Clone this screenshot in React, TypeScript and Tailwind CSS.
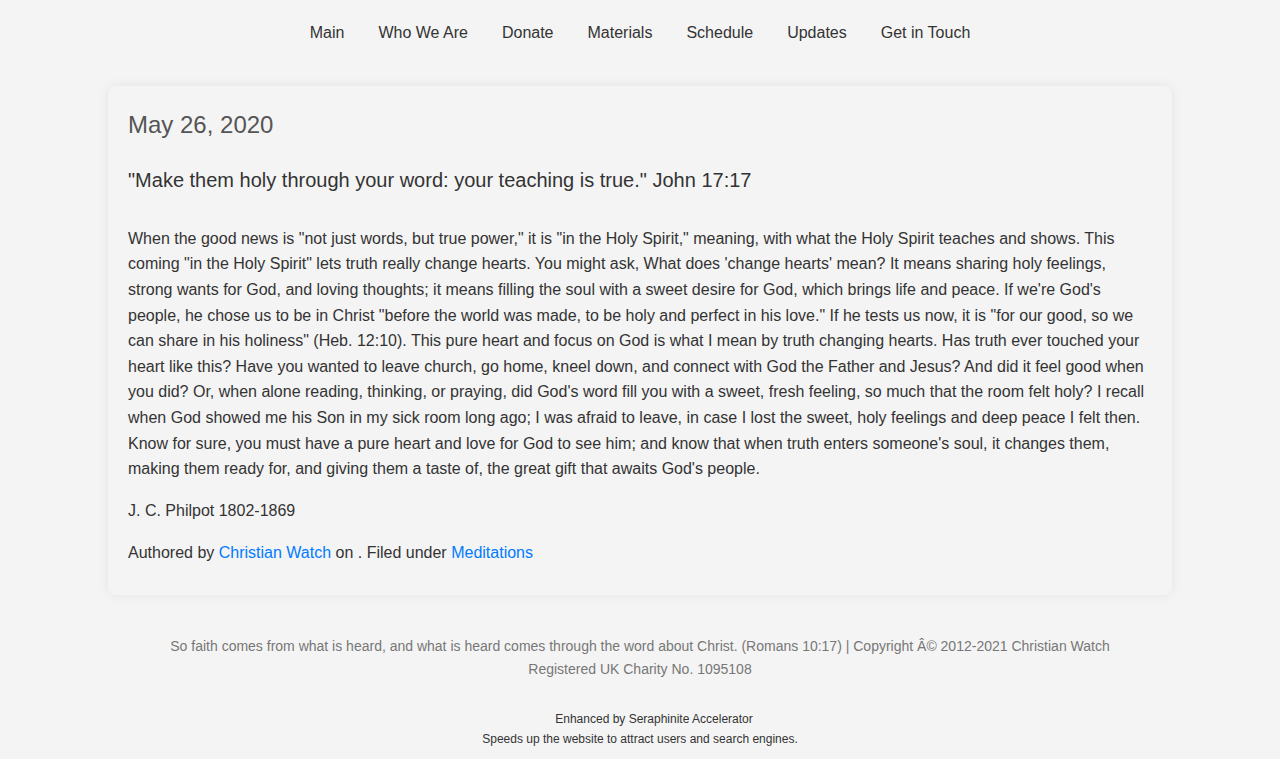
const navItems = ["Main", "Who We Are", "Donate", "Materials", "Schedule", "Updates", "Get in Touch"]

export default function App() {
  return (
    <div className="min-h-screen bg-[#f4f4f4] text-[#333] font-['Liberation_Sans',Arial,sans-serif]">
      <nav className="h-16 pt-0.5 flex items-center justify-center">
        {navItems.map((item) => (
          <a key={item} href="#" className="px-[17px] text-base leading-6 text-[#333]">
            {item}
          </a>
        ))}
      </nav>

      <main className="mt-[22px] mx-auto w-[1064px]">
        <article className="bg-[#f4f4f4] rounded-lg shadow-[0_0_12px_rgba(0,0,0,0.07)] px-5 pt-[25px] pb-[29px]">
          <h2 className="text-2xl leading-[1.2] text-[#555]">May 26, 2020</h2>
          <h3 className="mt-[28px] text-xl leading-[1.2] text-[#333]">
            "Make them holy through your word: your teaching is true." John 17:17
          </h3>
          <div className="mt-[34px] text-base leading-[1.6]">
            <p>
              When the good news is "not just words, but true power," it is "in the Holy Spirit," meaning, with what the
              Holy Spirit teaches and shows. This coming "in the Holy Spirit" lets truth really change hearts. You might
              ask, What does 'change hearts' mean? It means sharing holy feelings, strong wants for God, and loving
              thoughts; it means filling the soul with a sweet desire for God, which brings life and peace. If we're
              God's people, he chose us to be in Christ "before the world was made, to be holy and perfect in his love."
              If he tests us now, it is "for our good, so we can share in his holiness" (Heb. 12:10). This pure heart
              and focus on God is what I mean by truth changing hearts. Has truth ever touched your heart like this?
              Have you wanted to leave church, go home, kneel down, and connect with God the Father and Jesus? And did
              it feel good when you did? Or, when alone reading, thinking, or praying, did God's word fill you with a
              sweet, fresh feeling, so much that the room felt holy? I recall when God showed me his Son in my sick room
              long ago; I was afraid to leave, in case I lost the sweet, holy feelings and deep peace I felt then. Know
              for sure, you must have a pure heart and love for God to see him; and know that when truth enters
              someone's soul, it changes them, making them ready for, and giving them a taste of, the great gift that
              awaits God's people.
            </p>
            <p className="mt-4">J. C. Philpot 1802-1869</p>
            <p className="mt-[17px]">
              Authored by{" "}
              <a href="#" className="text-[#007bff]">
                Christian Watch
              </a>{" "}
              on . Filed under{" "}
              <a href="#" className="text-[#007bff]">
                Meditations
              </a>
            </p>
          </div>
        </article>
      </main>

      <footer className="mt-[40px] text-center">
        <div className="text-sm leading-[23px] text-[#777]">
          <p>
            So faith comes from what is heard, and what is heard comes through the word about Christ. (Romans 10:17) |
            Copyright Â© 2012-2021 Christian Watch
          </p>
          <p>Registered UK Charity No. 1095108</p>
        </div>
        <div className="mt-[28px] pb-3 text-xs leading-5 text-[#333]">
          <p>
            <span className="inline-block w-7" />
            Enhanced by Seraphinite Accelerator
          </p>
          <p>Speeds up the website to attract users and search engines.</p>
        </div>
      </footer>
    </div>
  )
}
